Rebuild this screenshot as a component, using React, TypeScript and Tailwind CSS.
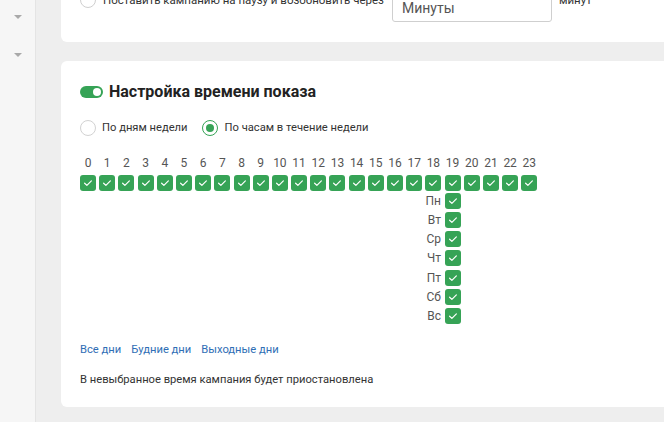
import React from "react";

const hours = Array.from({ length: 24 }, (_, i) => i);
const days = ["Пн", "Вт", "Ср", "Чт", "Пт", "Сб", "Вс"];

const Check = () => (
  <span className="flex h-4 w-4 items-center justify-center rounded-[3px] bg-[#36a356]">
    <svg viewBox="0 0 16 16" className="h-3 w-3" fill="none" stroke="#fff" strokeWidth="1.6" strokeLinecap="round" strokeLinejoin="round">
      <path d="M3.5 8.3l3 2.8 6-6" />
    </svg>
  </span>
);

const Caret = () => (
  <span className="block h-0 w-0 border-x-[4px] border-t-[4px] border-x-transparent border-t-[#a9a9a9]" />
);

export default function App() {
  return (
    <div
      className="flex h-[422px] w-[664px] overflow-hidden bg-[#eeeeee] text-[#333]"
      style={{ fontFamily: "Roboto, 'Noto Sans', sans-serif" }}
    >
      <aside className="flex w-[36px] shrink-0 flex-col items-center gap-[34px] border-r border-[#e4e4e4] bg-[#f6f6f6] pt-[15px]">
        <Caret />
        <Caret />
      </aside>

      <main className="flex flex-1 flex-col gap-[19px] pl-[25px]">
        <section className="-mr-4 -mt-[12px] rounded-bl-md bg-white pb-[20px] pl-[19px]">
          <div className="flex items-start">
            <div className="mt-[4px] flex items-center gap-[7px]">
              <span className="h-4 w-4 rounded-full border border-[#cfcfcf]" />
              <span className="text-[11.5px] leading-4">Поставить кампанию на паузу и возобновить через</span>
            </div>
            <div className="ml-[8px] flex h-[34px] w-[160px] items-end rounded-[3px] border border-[#cfcfcf] px-[9px] pb-[2px] text-[14px] text-[#555]">
              Минуты
            </div>
            <span className="mt-[4px] ml-[7px] text-[11.5px] leading-4">минут</span>
          </div>
        </section>

        <section className="-mr-4 h-[346px] rounded-l-md bg-white pl-[19px] pt-[21px]">
          <div className="flex items-center gap-[6px]">
            <span className="flex h-[12px] w-[23px] items-center justify-end rounded-full bg-[#36a356] pr-[2px]">
              <span className="h-[8px] w-[8px] rounded-full bg-white" />
            </span>
            <h2 className="text-[16px] font-bold leading-5 text-[#222]">Настройка времени показа</h2>
          </div>

          <div className="mt-[18px] flex items-center text-[11.2px]">
            <label className="flex items-center gap-[6px]">
              <span className="h-4 w-4 rounded-full border border-[#d2d2d2]" />
              По дням недели
            </label>
            <label className="ml-[14px] flex items-center gap-[7px]">
              <span className="flex h-4 w-4 items-center justify-center rounded-full border border-[#36a356]">
                <span className="h-2 w-2 rounded-full bg-[#36a356]" />
              </span>
              По часам в течение недели
            </label>
          </div>

          <div className="mt-[19px] flex gap-[3.2px]">
            {hours.map((h) => (
              <div key={h} className="flex w-4 flex-col items-center gap-[5px]">
                <span className="text-[12px] leading-[14px] text-[#555]">{h}</span>
                <Check />
              </div>
            ))}
          </div>

          <div className="ml-[344px] mt-[2px] flex flex-col gap-[3.2px]">
            {days.map((d) => (
              <div key={d} className="flex items-center">
                <span className="w-[20px] pr-[3px] text-right text-[12px] leading-4 text-[#555]">{d}</span>
                <span className="ml-[1px]"><Check /></span>
              </div>
            ))}
          </div>

          <div className="mt-[18px] flex gap-[10px] text-[11.2px] text-[#2f6eb5]">
            <span>Все дни</span>
            <span>Будние дни</span>
            <span>Выходные дни</span>
          </div>

          <p className="mt-[13px] text-[11.2px] text-[#333]">В невыбранное время кампания будет приостановлена</p>
        </section>
      </main>
    </div>
  );
}
